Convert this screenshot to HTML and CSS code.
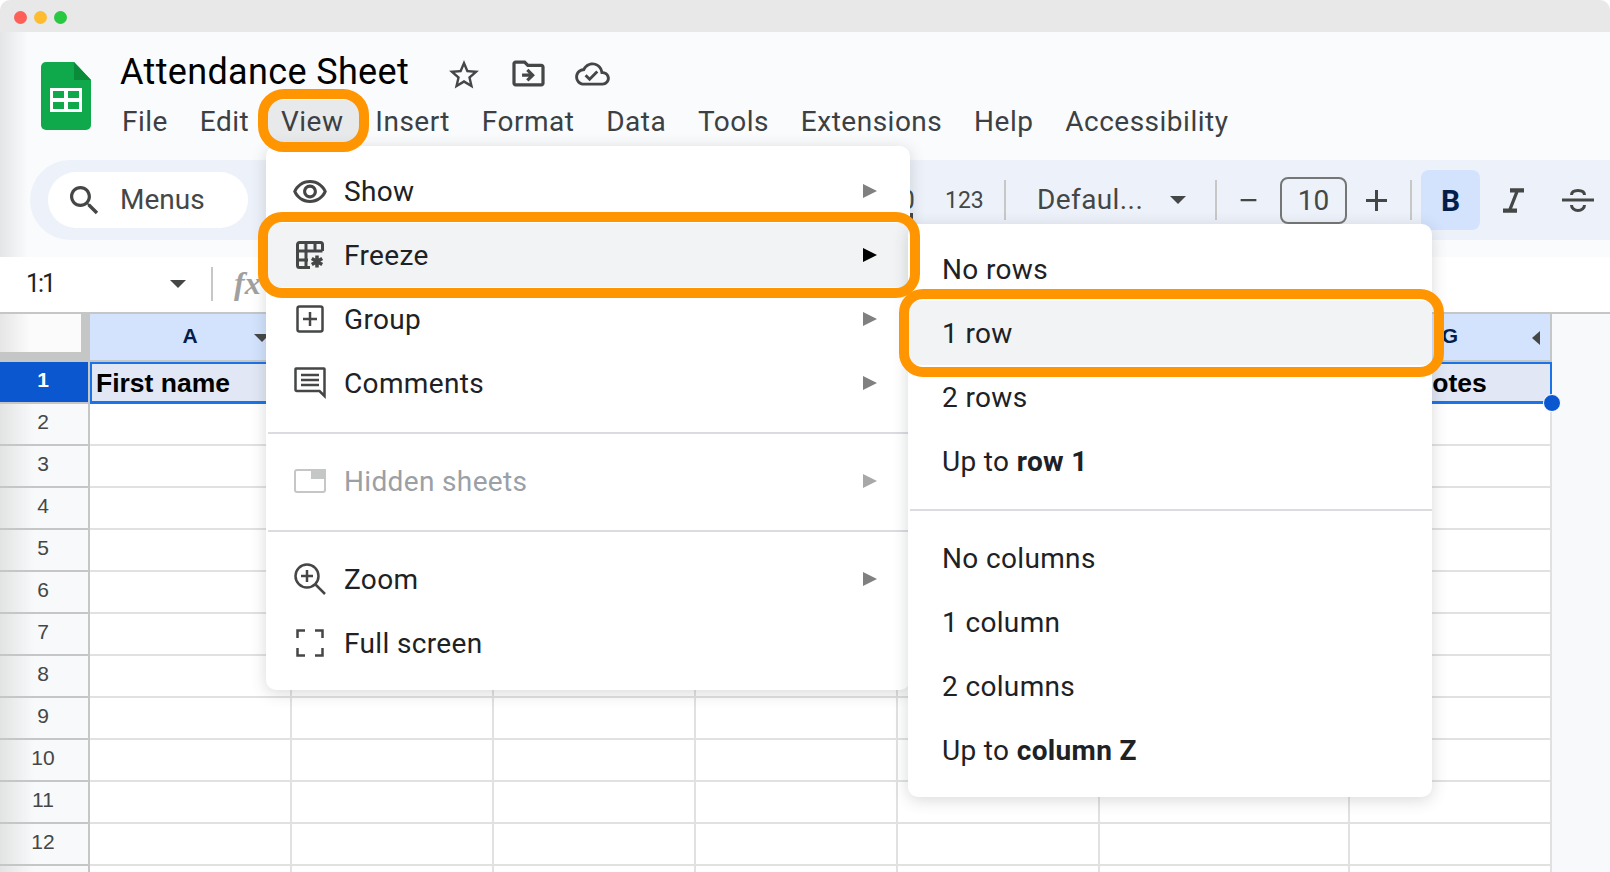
FILE: index.html
```html
<!DOCTYPE html>
<html lang="en">
<head>
<meta charset="utf-8">
<title>Attendance Sheet</title>
<link rel="stylesheet" href="styles.css">
</head>
<body>
<div class="window">
  <div class="titlebar">
    <span class="dot red"></span><span class="dot yellow"></span><span class="dot green"></span>
  </div>

  <header class="docheader">
    <div class="top">
      <svg class="logo" viewBox="0 0 50 68"><path d="M5 0h28l17 18v45a5 5 0 0 1-5 5H5a5 5 0 0 1-5-5V5a5 5 0 0 1 5-5z" fill="#0fa84a"/><path d="M33 0l17 18H33z" fill="#0b8a3a"/><path d="M9 26h32v24H9z" fill="#fff"/><path d="M12 29h11v7H12zM27 29h11v7H27zM12 40h11v7H12zM27 40h11v7H27z" fill="#0fa84a"/></svg>
      <div class="titleblock">
        <div class="titlerow">
          <span class="doctitle">Attendance Sheet</span>
          <svg class="ic star" viewBox="0 0 24 24"><path d="M22 9.24l-7.19-.62L12 2 9.19 8.63 2 9.24l5.46 4.73L5.82 21 12 17.27 18.18 21l-1.63-7.03L22 9.24zM12 15.4l-3.76 2.27 1-4.28-3.32-2.88 4.38-.38L12 6.1l1.71 4.04 4.38.38-3.32 2.88 1 4.28L12 15.4z"/></svg>
          <svg class="ic move" viewBox="2 3 20 18"><path d="M20 6h-8l-2-2H4c-1.1 0-2 .9-2 2v12c0 1.1.9 2 2 2h16c1.1 0 2-.9 2-2V8c0-1.1-.9-2-2-2zm0 12H4V6h5.17l2 2H20v10zm-8.01-9l-1.41 1.41L12.160 12H8v2h4.16l-1.59 1.59L11.990 17 16 13.01 11.99 9z"/></svg>
          <svg class="ic cloud" viewBox="0 3 24 18"><path d="M19.35 10.04C18.67 6.59 15.64 4 12 4 9.11 4 6.6 5.64 5.35 8.04 2.34 8.36 0 10.91 0 14c0 3.31 2.69 6 6 6h13c2.76 0 5-2.24 5-5 0-2.64-2.05-4.78-4.65-4.96zM19 18H6c-2.21 0-4-1.79-4-4 0-2.05 1.53-3.76 3.56-3.97l1.07-.11.5-.95C8.08 7.14 9.94 6 12 6c2.62 0 4.88 1.86 5.39 4.43l.3 1.5 1.53.11c1.56.1 2.78 1.41 2.78 2.96 0 1.65-1.35 3-3 3zm-9-3.82l-2.09-2.09L6.5 13.5 10 17l6.01-6.01-1.41-1.41z"/></svg>
        </div>
        <nav class="menubar">
          <span>File</span><span>Edit</span><span class="active">View</span><span>Insert</span><span>Format</span><span>Data</span><span>Tools</span><span>Extensions</span><span>Help</span><span>Accessibility</span>
        </nav>
      </div>
    </div>

    <div class="toolbar">
      <div class="searchpill">
        <svg class="ic search" viewBox="3 3 18 18"><path d="M15.5 14h-.79l-.28-.27C15.41 12.59 16 11.11 16 9.5 16 5.91 13.09 3 9.5 3S3 5.91 3 9.5 5.91 16 9.5 16c1.61 0 3.09-.59 4.23-1.57l.27.28v.79l5 4.99L20.49 19l-4.99-5zm-6 0C7.01 14 5 11.990 5 9.5S7.01 5 9.5 5 14 7.01 14 9.5 11.99 14 9.5 14z"/></svg>
        <span class="pilltext">Menus</span>
      </div>
      <div class="tb-hidden">.00</div>
      <span class="t123">123</span>
      <i class="tb-div d1"></i>
      <span class="fontname">Defaul...</span>
      <i class="caret fontcaret"></i>
      <i class="tb-div d2"></i>
      <svg class="ic minus" viewBox="0 0 21 4"><path d="M0 0h21v3H0z"/></svg>
      <span class="fontsize">10</span>
      <svg class="ic plus" viewBox="0 0 21 21"><path d="M9 0h3v9h9v3h-9v9H9v-9H0V9h9z"/></svg>
      <i class="tb-div d3"></i>
      <span class="boldbtn">B</span>
      <svg class="ic italic" viewBox="6 4 12 14"><path d="M10 4v2.400h2.800L9.200 15.600H6V18h8v-2.400h-2.800l3.600-9.200H18V4z"/></svg>
      <svg class="strike" viewBox="0 0 32 28"><path d="M0 14h32" /><path d="M9.500 9c0-3 2.800-4.500 6.500-4.500s6.500 1.500 6.500 4.500M9.500 19c0 3 2.800 5.500 6.500 5.500s6.500-2.500 6.500-5.500"/></svg>
    </div>
  </header>

  <div class="formula">
    <span class="namebox">1:1</span>
    <i class="caret namecaret"></i>
    <i class="fdiv"></i>
    <span class="fx">fx</span>
  </div>

  <div class="grid">
    <div class="corner"><div class="cornerinner"></div></div>
    <div class="colhead">A<i class="caret colcaret"></i></div><div class="colhead">B</div><div class="colhead">C</div><div class="colhead">D</div><div class="colhead">E</div><div class="colhead">F</div><div class="colhead lastcol">G<i class="leftcaret"></i></div><div class="gutter headgutter"></div>

    <div class="rowhead sel">1</div>
    <div class="cell s first">First name</div><div class="cell s"></div><div class="cell s"></div><div class="cell s"></div><div class="cell s"></div><div class="cell s"></div><div class="cell s last">Notes<i class="handle"></i></div><div class="gutter"></div>

    <div class="rowhead">2</div><div class="cell"></div><div class="cell"></div><div class="cell"></div><div class="cell"></div><div class="cell"></div><div class="cell"></div><div class="cell"></div><div class="gutter"></div>
    <div class="rowhead">3</div><div class="cell"></div><div class="cell"></div><div class="cell"></div><div class="cell"></div><div class="cell"></div><div class="cell"></div><div class="cell"></div><div class="gutter"></div>
    <div class="rowhead">4</div><div class="cell"></div><div class="cell"></div><div class="cell"></div><div class="cell"></div><div class="cell"></div><div class="cell"></div><div class="cell"></div><div class="gutter"></div>
    <div class="rowhead">5</div><div class="cell"></div><div class="cell"></div><div class="cell"></div><div class="cell"></div><div class="cell"></div><div class="cell"></div><div class="cell"></div><div class="gutter"></div>
    <div class="rowhead">6</div><div class="cell"></div><div class="cell"></div><div class="cell"></div><div class="cell"></div><div class="cell"></div><div class="cell"></div><div class="cell"></div><div class="gutter"></div>
    <div class="rowhead">7</div><div class="cell"></div><div class="cell"></div><div class="cell"></div><div class="cell"></div><div class="cell"></div><div class="cell"></div><div class="cell"></div><div class="gutter"></div>
    <div class="rowhead">8</div><div class="cell"></div><div class="cell"></div><div class="cell"></div><div class="cell"></div><div class="cell"></div><div class="cell"></div><div class="cell"></div><div class="gutter"></div>
    <div class="rowhead">9</div><div class="cell"></div><div class="cell"></div><div class="cell"></div><div class="cell"></div><div class="cell"></div><div class="cell"></div><div class="cell"></div><div class="gutter"></div>
    <div class="rowhead">10</div><div class="cell"></div><div class="cell"></div><div class="cell"></div><div class="cell"></div><div class="cell"></div><div class="cell"></div><div class="cell"></div><div class="gutter"></div>
    <div class="rowhead">11</div><div class="cell"></div><div class="cell"></div><div class="cell"></div><div class="cell"></div><div class="cell"></div><div class="cell"></div><div class="cell"></div><div class="gutter"></div>
    <div class="rowhead">12</div><div class="cell"></div><div class="cell"></div><div class="cell"></div><div class="cell"></div><div class="cell"></div><div class="cell"></div><div class="cell"></div><div class="gutter"></div>
    <div class="rowhead"></div><div class="cell"></div><div class="cell"></div><div class="cell"></div><div class="cell"></div><div class="cell"></div><div class="cell"></div><div class="cell"></div><div class="gutter"></div>
  </div>

  <div class="menu viewmenu">
    <div class="item"><span class="mi"><svg class="ic eye" viewBox="1 4 22 15"><path d="M12 6c3.790 0 7.170 2.130 8.820 5.500C19.170 14.870 15.790 17 12 17s-7.170-2.130-8.820-5.500C4.830 8.130 8.210 6 12 6m0-2C7 4 2.730 7.110 1 11.500 2.730 15.890 7 19 12 19s9.270-3.110 11-7.500C21.270 7.110 17 4 12 4zm0 5c1.380 0 2.500 1.120 2.500 2.500S13.380 14 12 14s-2.500-1.120-2.500-2.500S10.620 9 12 9m0-2c-2.480 0-4.500 2.020-4.500 4.500S9.520 16 12 16s4.500-2.020 4.500-4.500S14.480 7 12 7z"/></svg></span><span class="lbl">Show</span><i class="arr"></i></div>
    <div class="item hot"><span class="mi"><svg class="line thick" viewBox="0 0 28 28" width="28" height="28"><path d="M14 26.500H3.500a2 2 0 0 1-2-2v-21a2 2 0 0 1 2-2h21a2 2 0 0 1 2 2v6.500M1.500 10h25M1.500 19H12M10 1.500v25M19 1.500V10"/><path class="star6" d="M21 14.500v12M15.800 17.500l10.400 6M26.200 17.500l-10.400 6"/></svg></span><span class="lbl">Freeze</span><i class="arr dark"></i></div>
    <div class="item"><span class="mi"><svg class="line" viewBox="0 0 28 28" width="28" height="28"><rect x="1.500" y="1.500" width="25" height="25" rx="2"/><path d="M14 7v14M7 14h14"/></svg></span><span class="lbl">Group</span><i class="arr"></i></div>
    <div class="item"><span class="mi"><svg class="line" viewBox="0 0 32 32" width="32" height="32"><path d="M30.500 2v27l-5-5H3a1.500 1.500 0 0 1-1.500-1.500V2A.5.500 0 0 1 2 1.500h28a.5.500 0 0 1 .5.5zM7 8h18M7 13h18M7 18h18"/></svg></span><span class="lbl">Comments</span><i class="arr"></i></div>
    <div class="sep"></div>
    <div class="item off"><span class="mi"><svg class="hiddenic" viewBox="0 0 32 24" width="32" height="24"><rect x="1" y="1" width="30" height="22" rx="2"/><path class="fill" d="M18 1h13v8H18z"/></svg></span><span class="lbl">Hidden sheets</span><i class="arr"></i></div>
    <div class="sep"></div>
    <div class="item"><span class="mi"><svg class="line" viewBox="0 0 32 32" width="32" height="32"><circle cx="13" cy="13" r="11.500"/><path d="M13 7v12M7 13h12M21.500 21.500l9.500 9.500"/></svg></span><span class="lbl">Zoom</span><i class="arr"></i></div>
    <div class="item"><span class="mi"><svg class="line" viewBox="0 0 28 28" width="28" height="28"><path d="M9 1.500H1.500V9M19 1.500h7.500V9M1.500 19v7.500H9M26.500 19v7.500H19"/></svg></span><span class="lbl">Full screen</span></div>
  </div>

  <div class="menu freezemenu">
    <div class="item plain"><span class="lbl">No rows</span></div>
    <div class="item plain hot"><span class="lbl">1 row</span></div>
    <div class="item plain"><span class="lbl">2 rows</span></div>
    <div class="item plain"><span class="lbl">Up to <b>row 1</b></span></div>
    <div class="sep"></div>
    <div class="item plain"><span class="lbl">No columns</span></div>
    <div class="item plain"><span class="lbl">1 column</span></div>
    <div class="item plain"><span class="lbl">2 columns</span></div>
    <div class="item plain"><span class="lbl">Up to <b>column Z</b></span></div>
  </div>

  <div class="ring ring-view"></div>
  <div class="ring ring-freeze"></div>
  <div class="ring ring-row"></div>
</div>
</body>
</html>
```
FILE: styles.css
```css
* { box-sizing: border-box; }
html, body { margin: 0; padding: 0; height: 100%; background: #fff; overflow: hidden; }
body { font-family: Roboto, "Noto Sans", sans-serif; color: #202124; }
i { display: block; font-style: normal; }

.window { position: relative; width: 1610px; height: 872px; display: flex; flex-direction: column; overflow: hidden; }

.titlebar { flex: 0 0 32px; display: flex; align-items: center; gap: 7px; padding: 2px 0 0 13.500px; background: #e8e8e8; border-radius: 10px 10px 0 0; }
.dot { width: 13px; height: 13px; border-radius: 50%; }
.dot.red { background: #ff5f57; }
.dot.yellow { background: #febc2e; }
.dot.green { background: #28c840; }

.docheader { flex: 0 0 225px; background: linear-gradient(to right, #e4e5e6, #f9fbfd 28px); display: flex; flex-direction: column; }
.top { flex: 0 0 128px; display: flex; padding: 30px 0 0 41px; }
.logo { width: 50px; height: 68px; flex: none; }
.titleblock { margin-left: 29px; margin-top: -12px; }
.titlerow { height: 44px; display: flex; align-items: center; }
.doctitle { font-size: 36px; color: #000; letter-spacing: .35px; margin-right: 37px; white-space: nowrap; }
.ic { fill: #444746; display: block; flex: none; }
.star { width: 36px; height: 36px; margin-top: 5px; }
.move { width: 33px; height: 29px; margin: 3px 0 0 30px; }
.cloud { width: 37px; height: 26px; margin: 3px 0 0 29px; }

.menubar { display: flex; gap: 31.800px; margin: 8px 0 0 2px; height: 38px; align-items: center; font-size: 28px; letter-spacing: .5px; color: #3c4043; white-space: nowrap; }
.menubar .active { background: #e8e9eb; padding: 4px 17px 4px 14px; margin: 0 -17px 0 -14px; line-height: 35px; }

.toolbar { flex: 0 0 80px; margin-left: 30px; display: flex; align-items: center; background: #edf2fa; border-radius: 40px 0 0 40px; padding-left: 18px; }
.searchpill { flex: 0 0 200px; height: 56px; border-radius: 28px; background: #fff; display: flex; align-items: center; padding-left: 22px; font-size: 28px; color: #444746; }
.search { width: 29px; height: 29px; margin-right: 21px; }
.pilltext { padding-bottom: 2px; }
.tb-hidden { position: relative; flex: 0 0 667px; text-align: right; font-size: 26px; color: #444746; }
.tb-hidden::after { content: ""; position: absolute; right: 2px; top: 28px; width: 3px; height: 7px; background: #444746; }
.t123 { font-size: 23px; color: #444746; margin-left: 30px; width: 37px; }
.tb-div { width: 2px; height: 40px; background: #c7c7c7; flex: none; }
.d1 { margin-left: 22px; }
.fontname { font-size: 28px; letter-spacing: .4px; color: #444746; margin-left: 31px; width: 106px; white-space: nowrap; padding-bottom: 2px; }
.caret { width: 0; height: 0; border-left: 8px solid transparent; border-right: 8px solid transparent; border-top: 8px solid #444746; flex: none; }
.fontcaret { margin-left: 27px; }
.d2 { margin-left: 29px; }
.minus { width: 21px; height: 3px; margin-left: 21px; }
.fontsize { width: 67px; height: 47px; margin-left: 21px; border: 2px solid #747775; border-radius: 8px; display: flex; align-items: center; justify-content: center; font-size: 28px; color: #444746; flex: none; }
.plus { width: 21px; height: 21px; margin-left: 19px; }
.d3 { margin-left: 23px; }
.boldbtn { width: 59px; height: 60px; margin-left: 9px; border-radius: 8px; background: #d3e3fd; display: flex; align-items: center; justify-content: center; font-size: 30px; font-weight: 700; color: #041e49; flex: none; }
.italic { width: 21px; height: 25px; margin-left: 23px; }
.strike { width: 32px; height: 28px; margin-left: 38px; fill: none; stroke: #444746; stroke-width: 3; flex: none; }

.formula { flex: 0 0 55px; background: #fff; display: flex; align-items: center; padding: 0 0 2px 26px; }
.namebox { font-size: 25px; letter-spacing: -2px; color: #202124; width: 144px; }
.namecaret { margin-left: 0; }
.fdiv { width: 2px; height: 34px; background: #c7c7c7; margin-left: 25px; }
.fx { font-family: "Liberation Serif", serif; font-style: italic; font-weight: 700; font-size: 32px; color: #a0a0a0; margin-left: 21px; }

.grid { flex: 1; display: grid; grid-template-columns: 90px repeat(5, 202px) 250px 202px 1fr; grid-template-rows: 50px repeat(13, 42px); background: #f8f9fa; font-family: "Liberation Sans", sans-serif; }
.corner { background: #c4c7c5; border-top: 2px solid #c4c7c5; padding-right: 9px; padding-bottom: 10px; }
.cornerinner { height: 100%; background: linear-gradient(to right, #e6e6e6, #fbfbfb 30px); }
.colhead { position: relative; background: #d3e3fd; border-top: 2px solid #c4c7c5; border-bottom: 2px solid #c4c7c5; border-right: 2px solid #c4c7c5; display: flex; align-items: center; justify-content: center; padding-bottom: 2px; font-weight: 700; font-size: 21px; color: #041e49; }
.colcaret { position: absolute; right: 20px; top: 20px; }
.leftcaret { position: absolute; right: 10px; top: 17px; width: 0; height: 0; border-top: 7px solid transparent; border-bottom: 7px solid transparent; border-right: 8px solid #444746; }
.headgutter { border-top: 2px solid #c4c7c5; }
.gutter { background: #f8f9fa; }
.rowhead { background: linear-gradient(to right, #e2e3e3, #f8f9fa 34px); border-right: 2px solid #c4c7c5; border-bottom: 2px solid #c4c7c5; display: flex; align-items: center; justify-content: center; font-size: 21px; color: #444746; padding: 0 2px 4px 0; }
.rowhead.sel { background: #0b57d0; color: #fff; font-weight: 700; }
.cell { background: #fff; border-right: 2px solid #e1e1e1; border-bottom: 2px solid #e1e1e1; }
.cell.s { position: relative; background: #e1e7f5; border-top: 2px solid #1a73e8; border-bottom: 3px solid #1a73e8; border-right: 0; font-weight: 700; font-size: 26.500px; color: #000; display: flex; align-items: center; padding-top: 2px; }
.cell.first { border-left: 2px solid #1a73e8; padding-left: 4px; }
.cell.last { border-right: 2px solid #1a73e8; justify-content: center; }
.handle { position: absolute; right: -11px; bottom: -11px; width: 18px; height: 18px; border-radius: 50%; background: #0b57d0; border: 1.500px solid #fff; }

.menu { position: absolute; background: #fff; border-radius: 10px; box-shadow: 0 3px 16px rgba(60, 64, 67, .2); padding: 13px 0 15px; font-size: 28px; letter-spacing: .35px; }
.viewmenu { left: 266px; top: 146px; width: 644px; }
.freezemenu { left: 908px; top: 224px; width: 524px; padding: 13px 0 15px; }
.item { height: 64px; display: flex; align-items: center; padding-right: 33px; white-space: nowrap; color: #202124; }
.item.hot { background: #f1f3f4; }
.item.plain { padding-left: 34px; }
.mi { flex: 0 0 78px; display: flex; justify-content: center; padding-left: 10px; }
.lbl { flex: 1; }
.lbl b { font-weight: 700; }
.arr { width: 0; height: 0; border-top: 7px solid transparent; border-bottom: 7px solid transparent; border-left: 14px solid #808080; }
.arr.dark { border-left-color: #000; }
.sep { height: 2px; margin: 17px 0 15px 2px; background: #dcdce0; }
.freezemenu .sep { margin-top: 16px; }
.off { color: #9aa0a6; }
.off .arr { border-left-color: #a8a8a8; }
.eye { width: 34px; height: 23px; }
.line { fill: none; stroke: #444746; stroke-width: 2.500; display: block; }
.line.thick { stroke-width: 3; }
.star6 { stroke-width: 3.500; }
.hiddenic { fill: none; stroke: #c4c7c5; stroke-width: 2; display: block; }
.hiddenic .fill { fill: #c4c7c5; }

.ring { position: absolute; border: 10px solid #ff9500; pointer-events: none; }
.ring-view { left: 258px; top: 89px; width: 111px; height: 63px; border-radius: 26px; }
.ring-freeze { left: 258px; top: 212px; width: 662px; height: 86px; border-radius: 24px; }
.ring-row { left: 899px; top: 289px; width: 545px; height: 88px; border-radius: 24px; }
```
